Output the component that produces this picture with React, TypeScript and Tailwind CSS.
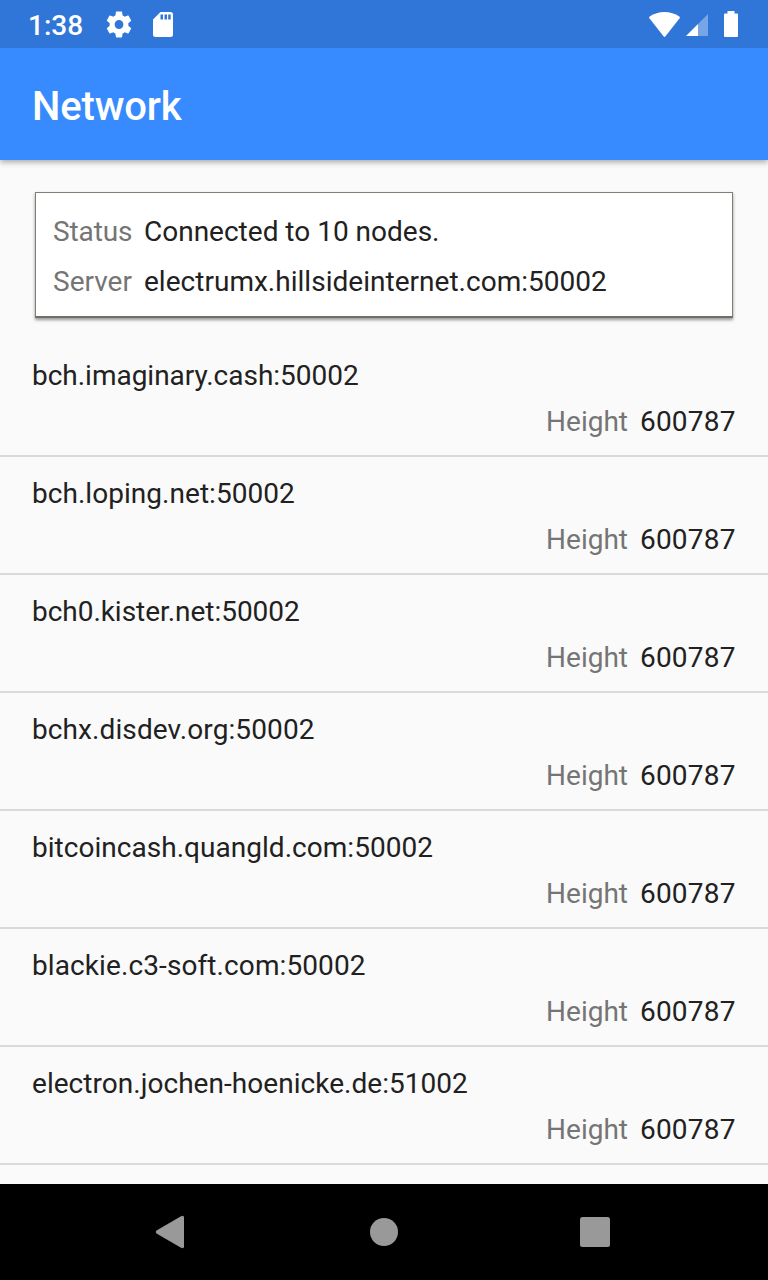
const servers = [
  { host: 'bch.imaginary.cash:50002', tracking: 'tracking-[-0.02px]' },
  { host: 'bch.loping.net:50002', tracking: 'tracking-[0.04px]' },
  { host: 'bch0.kister.net:50002', tracking: 'tracking-[-0.04px]' },
  { host: 'bchx.disdev.org:50002', tracking: 'tracking-[0.1px]' },
  { host: 'bitcoincash.quangld.com:50002', tracking: 'tracking-[0.03px]' },
  { host: 'blackie.c3-soft.com:50002', tracking: 'tracking-[0.1px]' },
  { host: 'electron.jochen-hoenicke.de:51002', tracking: 'tracking-[0.04px]' },
];

function StatusBar() {
  return (
    <div className="relative z-20 flex h-12 shrink-0 items-center bg-[#3076d9] pr-[30px] pl-7 text-white">
      <span className="w-[76px] pt-[3px] text-[28px] leading-none font-medium">1:38</span>
      <svg className="h-[31px] w-[30px]" viewBox="0 0 24 24" preserveAspectRatio="none" fill="currentColor">
        <path d="M19.43 12.98c.04-.32.07-.64.07-.98s-.03-.66-.07-.98l2.11-1.65c.19-.15.24-.42.12-.64l-2-3.46c-.12-.22-.39-.3-.61-.22l-2.49 1c-.52-.4-1.08-.73-1.69-.98l-.38-2.65A.488.488 0 0 0 14 2h-4c-.25 0-.46.18-.49.42l-.38 2.65c-.61.25-1.17.59-1.69.98l-2.49-1c-.23-.09-.49 0-.61.22l-2 3.46c-.13.22-.07.49.12.64l2.11 1.65c-.04.32-.07.65-.07.98s.03.66.07.98l-2.11 1.65c-.19.15-.24.42-.12.64l2 3.46c.12.22.39.3.61.22l2.49-1c.52.4 1.08.73 1.69.98l.38 2.65c.03.24.24.42.49.42h4c.25 0 .46-.18.49-.42l.38-2.65c.61-.25 1.17-.59 1.69-.98l2.49 1c.23.09.49 0 .61-.22l2-3.46c.12-.22.07-.49-.12-.64zM12 15.5a3.500 3.500 0 1 1 0-7 3.500 3.500 0 0 1 0 7z" />
      </svg>
      <svg className="ml-[19px] h-[25px] w-5" viewBox="0 0 20 25" fill="currentColor">
        <path fillRule="evenodd" d="M7.500 0h10A2.500 2.500 0 0 1 20 2.500v20a2.500 2.500 0 0 1-2.500 2.500h-15A2.500 2.500 0 0 1 0 22.500v-15zM7.500 2.500v5H10v-5zm4 0v5H14v-5zm3.700 0v5h2.500v-5z" />
      </svg>
      <div className="flex-1" />
      <svg className="h-[25px] w-[31px]" viewBox="0 0 31 25" fill="currentColor">
        <path d="M14.500 24.300.4 6.200Q-.2 5.200.7 4.500C5 1.500 10 0 15.500 0s10.500 1.500 14.800 4.500q.9.7.3 1.700L16.500 24.300q-1 1.200-2 0z" />
      </svg>
      <svg className="mt-[2px] ml-[6px] size-[22px]" viewBox="0 0 22 22" fill="currentColor">
        <path d="M22 0v22H12V10z" opacity=".35" />
        <path d="M12 10v12H0z" />
      </svg>
      <svg className="ml-[16px] h-[26px] w-[14px]" viewBox="0 0 14 26" fill="currentColor">
        <path d="M3.500 0h7v2.500H13q1 0 1 1V25q0 1-1 1H1q-1 0-1-1V3.500q0-1 1-1h2.500z" />
      </svg>
    </div>
  );
}

function SummaryCard() {
  return (
    <section className="mx-[35px] mt-8 h-[126px] shrink-0 border border-b-2 border-[#827d75] border-b-[#716d69] bg-white px-[17px] pt-[14px] leading-[50px] shadow-[0_2px_3px_rgba(0,0,0,0.4)]">
      <div className="flex h-[50px]">
        <span className="w-[91px] tracking-[-0.1px] text-[#757575]">Status</span>
        <span>Connected to 10 nodes.</span>
      </div>
      <div className="flex h-[50px]">
        <span className="w-[91px] text-[#757575]">Server</span>
        <span className="tracking-[0.02px]">electrumx.hillsideinternet.com:50002</span>
      </div>
    </section>
  );
}

function ServerRow({ host, tracking }: { host: string; tracking: string }) {
  return (
    <li className="h-[118px] shrink-0 border-b-2 border-[#dadada] px-8 pt-[14px] leading-[46px]">
      <div className={tracking}>{host}</div>
      <div className="flex justify-end gap-3">
        <span className="text-[#757575]">Height</span>
        <span className="w-24 tracking-[0.2px]">600787</span>
      </div>
    </li>
  );
}

export default function App() {
  return (
    <div className="flex h-[1280px] w-[768px] flex-col overflow-hidden bg-[#fafafa] font-['Roboto',sans-serif] text-[28px] text-[#212121]">
      <StatusBar />
      <header className="z-10 flex h-28 shrink-0 items-center bg-[#378bff] px-8 pt-1.5 text-[40px] font-medium tracking-[-0.15px] text-white shadow-[0_2px_6px_rgba(0,0,0,0.35)]">
        <h1>Network</h1>
      </header>
      <main className="flex h-[1024px] shrink-0 flex-col overflow-hidden">
        <SummaryCard />
        <ul className="mt-[21px] flex flex-col">
          {servers.map((server) => (
            <ServerRow key={server.host} {...server} />
          ))}
        </ul>
      </main>
      <nav className="flex h-24 shrink-0 items-center bg-black pl-[155px] text-[#999]">
        <svg className="h-[34px] w-[30px]" viewBox="0 0 30 34" fill="currentColor">
          <path d="M1.500 15.500 26 1.300q3-1.300 3 1.200v29q0 2.500-3 1.200L1.500 18.500q-1.500-1.500 0-3z" />
        </svg>
        <svg className="ml-[185px] size-7" viewBox="0 0 28 28" fill="currentColor">
          <circle cx="14" cy="14" r="14" />
        </svg>
        <svg className="ml-[182px] size-[30px]" viewBox="0 0 30 30" fill="currentColor">
          <rect width="30" height="30" rx="2.5" />
        </svg>
      </nav>
    </div>
  );
}
